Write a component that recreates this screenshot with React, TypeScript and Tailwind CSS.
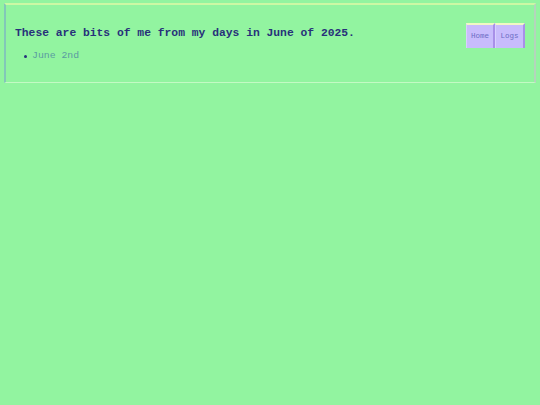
import React from "react";

export default function App() {
  return (
    <div className="min-h-[405px] w-full bg-[#92f4a0] pt-[3px] px-[4px]" style={{ fontFamily: '"Liberation Mono", "Courier New", monospace' }}>
      <div className="border-t-2 border-t-[#ccf8a4] border-l-2 border-l-[#82c8b8] border-r-2 border-r-[#b4d4bc] border-b border-b-[#c4fac4] flex justify-between items-start pl-[9px] pr-[9px] pt-[18px] pb-[20px]">
        <div>
          <h1 className="text-[11.33px] font-bold text-[#27307a] leading-[14px] m-0 pt-[3px]">
            These are bits of me from my days in June of 2025.
          </h1>
          <ul className="mt-[10px] pl-[9px] list-none">
            <li className="flex items-center text-[9.8px] text-[#5a9aa0] leading-[12px]">
              <span className="inline-block w-[3px] h-[3px] rounded-full bg-[#27307a] mr-[5px]"></span>
              June 2nd
            </li>
          </ul>
        </div>
        <nav className="flex">
          <a className="block w-[29px] h-[25px] bg-[#c8bcfc] border-t-2 border-t-[#f0f8c4] border-l border-l-[#d8d0ff] border-r-2 border-r-[#a890e8] text-[7.5px] text-[#6c6cc4] flex items-center justify-center">Home</a>
          <a className="block w-[30px] h-[25px] bg-[#c8bcfc] border-t-2 border-t-[#f0f8c4] border-l border-l-[#d8d0ff] border-r-2 border-r-[#a890e8] text-[7.5px] text-[#6c6cc4] flex items-center justify-center">Logs</a>
        </nav>
      </div>
    </div>
  );
}
